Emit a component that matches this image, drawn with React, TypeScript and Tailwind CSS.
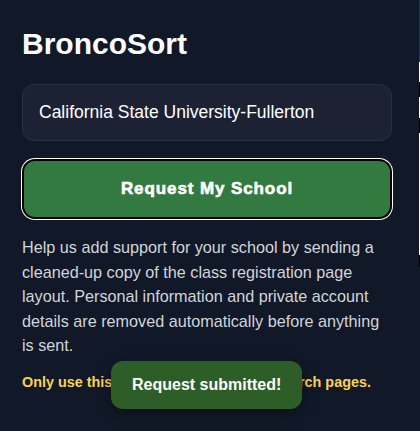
import React from "react";

export default function App() {
  return (
    <div className="relative flex h-[431px] w-[420px] overflow-hidden bg-[#111827] font-['Liberation_Sans',Arial,sans-serif]">
      <main className="flex w-[419px] flex-col px-[22px] pt-[26px]">
        <h1 className="text-[30px] font-bold leading-[36px] text-white">BroncoSort</h1>
        <div className="mt-[22px] flex h-[57px] w-[370px] items-center rounded-[12px] border border-[#283044] bg-[#1c2133] px-4">
          <span className="text-[17.5px] text-white">California State University-Fullerton</span>
        </div>
        <button className="mt-[18px] flex h-[60px] w-[370px] items-center justify-center rounded-[13px] border-2 border-black bg-[#337a40] text-[17px] font-bold tracking-[0.9px] text-white ring-1 ring-white [-webkit-text-stroke:0.6px_white]">
          Request My School
        </button>
        <p className="mt-[16px] w-[362px] text-[16.2px] leading-[24.5px] text-[#d1d5db]">
          Help us add support for your school by sending a cleaned-up copy of the class registration page layout. Personal information and private account details are removed automatically before anything is sent.
        </p>
        <p className="mt-[14px] w-[370px] text-[14.4px] font-bold leading-[21.6px] text-[#fcd34d]">
          Only use this on your school's class search pages.
        </p>
      </main>
      <div className="flex w-px flex-col">
        <div className="h-[62px] bg-[#1d3a55]" />
        <div className="h-[20px] bg-white" />
        <div className="h-[15px] bg-black" />
        <div className="h-[21px] bg-white" />
        <div className="h-[15px] bg-black" />
        <div className="h-[122px] bg-white" />
        <div className="h-[12px] bg-black" />
      </div>
      <div className="absolute bottom-[22px] left-[111px] flex h-[48px] items-center rounded-[12px] bg-[#2e5e27] px-[21px] shadow-[0_4px_14px_rgba(0,0,0,0.35)]">
        <span className="text-[16px] font-bold text-white">Request submitted!</span>
      </div>
    </div>
  );
}
